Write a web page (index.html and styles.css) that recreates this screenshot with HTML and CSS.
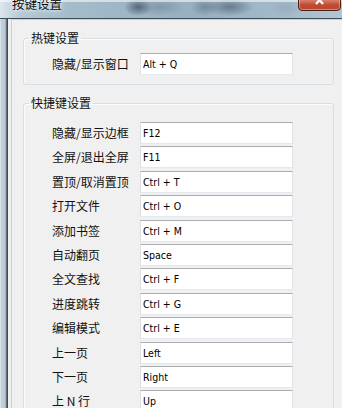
FILE: index.html
```html
<!DOCTYPE html>
<html lang="zh-CN">
<head>
<meta charset="utf-8">
<title>按键设置</title>
<link rel="stylesheet" href="styles.css">
</head>
<body>
<div class="window">
  <div class="titlebar">
    <span class="title">按键设置</span>
    <div class="close">
      <svg width="14" height="10" viewBox="0 0 14 10"><path d="M3 -4 L10 4 M10 -4 L3 4" stroke="#fff" stroke-width="2.2" fill="none"/></svg>
    </div>
  </div>
  <div class="body">
    <div class="frame-left"></div>
    <div class="client">
      <div class="panel">
        <fieldset class="group">
          <legend>热键设置</legend>
          <div class="rows">
            <label class="lbl">隐藏/显示窗口</label><input class="key" readonly value="Alt + Q">
          </div>
        </fieldset>
        <fieldset class="group group2">
          <legend>快捷键设置</legend>
          <div class="rows">
            <label class="lbl">隐藏/显示边框</label><input class="key" readonly value="F12">
            <label class="lbl">全屏/退出全屏</label><input class="key" readonly value="F11">
            <label class="lbl">置顶/取消置顶</label><input class="key" readonly value="Ctrl + T">
            <label class="lbl">打开文件</label><input class="key" readonly value="Ctrl + O">
            <label class="lbl">添加书签</label><input class="key" readonly value="Ctrl + M">
            <label class="lbl">自动翻页</label><input class="key" readonly value="Space">
            <label class="lbl">全文查找</label><input class="key" readonly value="Ctrl + F">
            <label class="lbl">进度跳转</label><input class="key" readonly value="Ctrl + G">
            <label class="lbl">编辑模式</label><input class="key" readonly value="Ctrl + E">
            <label class="lbl">上一页</label><input class="key" readonly value="Left">
            <label class="lbl">下一页</label><input class="key" readonly value="Right">
            <label class="lbl">上 N 行</label><input class="key" readonly value="Up">
          </div>
        </fieldset>
      </div>
    </div>
  </div>
</div>
</body>
</html>
```

FILE: styles.css
```css
* { box-sizing: border-box; }
html, body {
  margin: 0;
  padding: 0;
  width: 342px;
  height: 408px;
  overflow: hidden;
  background: #f0f0f0;
}
.window {
  width: 342px;
  height: 408px;
  display: flex;
  flex-direction: column;
  font-family: "Noto Sans CJK SC", "Noto Sans", sans-serif;
}
.titlebar {
  position: relative;
  height: 19px;
  flex: none;
  overflow: hidden;
  border-bottom: 1px solid #3e4d5a;
  background:
    radial-gradient(ellipse 14px 9px at 138px 7px, rgba(70,90,108,0.85), rgba(70,90,108,0) 100%),
    radial-gradient(ellipse 26px 9px at 160px 7px, rgba(110,132,150,0.55), rgba(110,132,150,0) 100%),
    radial-gradient(ellipse 24px 9px at 230px 7px, rgba(80,100,118,0.7), rgba(80,100,118,0) 100%),
    radial-gradient(ellipse 14px 9px at 205px 7px, rgba(95,115,132,0.6), rgba(95,115,132,0) 100%),
    radial-gradient(ellipse 16px 9px at 286px 8px, rgba(140,160,176,0.5), rgba(140,160,176,0) 100%),
    linear-gradient(to right, #dce6ec 0px, #b6c9d6 20px, #a6bdcc 60px, #9fb6c6 120px, #97afc0 200px, #a3bacb 280px, #b0c6d4 342px);
}
.titlebar::before {
  content: "";
  position: absolute;
  left: 0; right: 0; top: 0;
  height: 2px;
  background: rgba(255,255,255,0.55);
}
.title {
  position: absolute;
  left: 12px;
  top: -4px;
  font-size: 12.5px;
  line-height: 16px;
  color: #0c0c0c;
  text-shadow: 0 0 6px rgba(255,255,255,0.9), 0 0 3px rgba(255,255,255,0.9);
}
.close {
  position: absolute;
  left: 298px;
  top: -4px;
  width: 43px;
  height: 15px;
  border: 1px solid #4e1c14;
  border-radius: 0 0 4px 4px;
  background: linear-gradient(to bottom, #e3a18f 0%, #cf6a52 40%, #c04a2e 60%, #b84a32 100%);
  box-shadow: inset 0 0 0 1px rgba(255,210,190,0.45);
  display: flex;
  justify-content: center;
  align-items: flex-start;
  padding-top: 3px;
}
.close svg { display: block; }
.body {
  flex: 1;
  display: flex;
  min-height: 0;
}
.frame-left {
  width: 8px;
  flex: none;
  background: linear-gradient(to right, #e8eef2 0px, #c3d2dc 1px, #b8c9d5 5px, #8e9ca8 6px, #3e4a55 7px, #3e4a55 8px);
}
.client {
  flex: 1;
  background: #f0f0f0;
  padding-left: 3px;
  overflow: hidden;
}
.panel {
  width: 340px;
  height: 420px;
  border-top: 1px solid #c9d0d6;
  border-left: 1px solid #c9d0d6;
  padding: 10px 0 0 11px;
}
.group {
  width: 311px;
  margin: 0;
  padding: 7px 0 9px 5px;
  border: 1px solid #d5dfe5;
  border-radius: 3px;
  box-shadow: inset 1px 1px 0 #fbfcfd;
}
.group2 {
  margin-top: 10px;
  padding-top: 11px;
}
.group legend {
  padding: 0 2px;
  font-size: 12px;
  line-height: 16px;
  color: #111;
}
.rows {
  display: grid;
  grid-template-columns: 88px 153px;
  grid-auto-rows: 22px;
  row-gap: 2.4px;
  padding-left: 23px;
}
.lbl {
  font-size: 12px;
  line-height: 22px;
  color: #111;
  white-space: nowrap;
}
.key {
  display: block;
  width: 153px;
  height: 22px;
  margin: 0;
  padding: 0 0 0 2px;
  border: 1px solid;
  border-color: #abadb3 #e2e3ea #e3e9ef #dbdfe6;
  background: #fff;
  font-family: "DejaVu Sans Condensed", "DejaVu Sans", sans-serif;
  font-stretch: condensed;
  font-size: 10.5px;
  color: #000;
  outline: none;
}
```
